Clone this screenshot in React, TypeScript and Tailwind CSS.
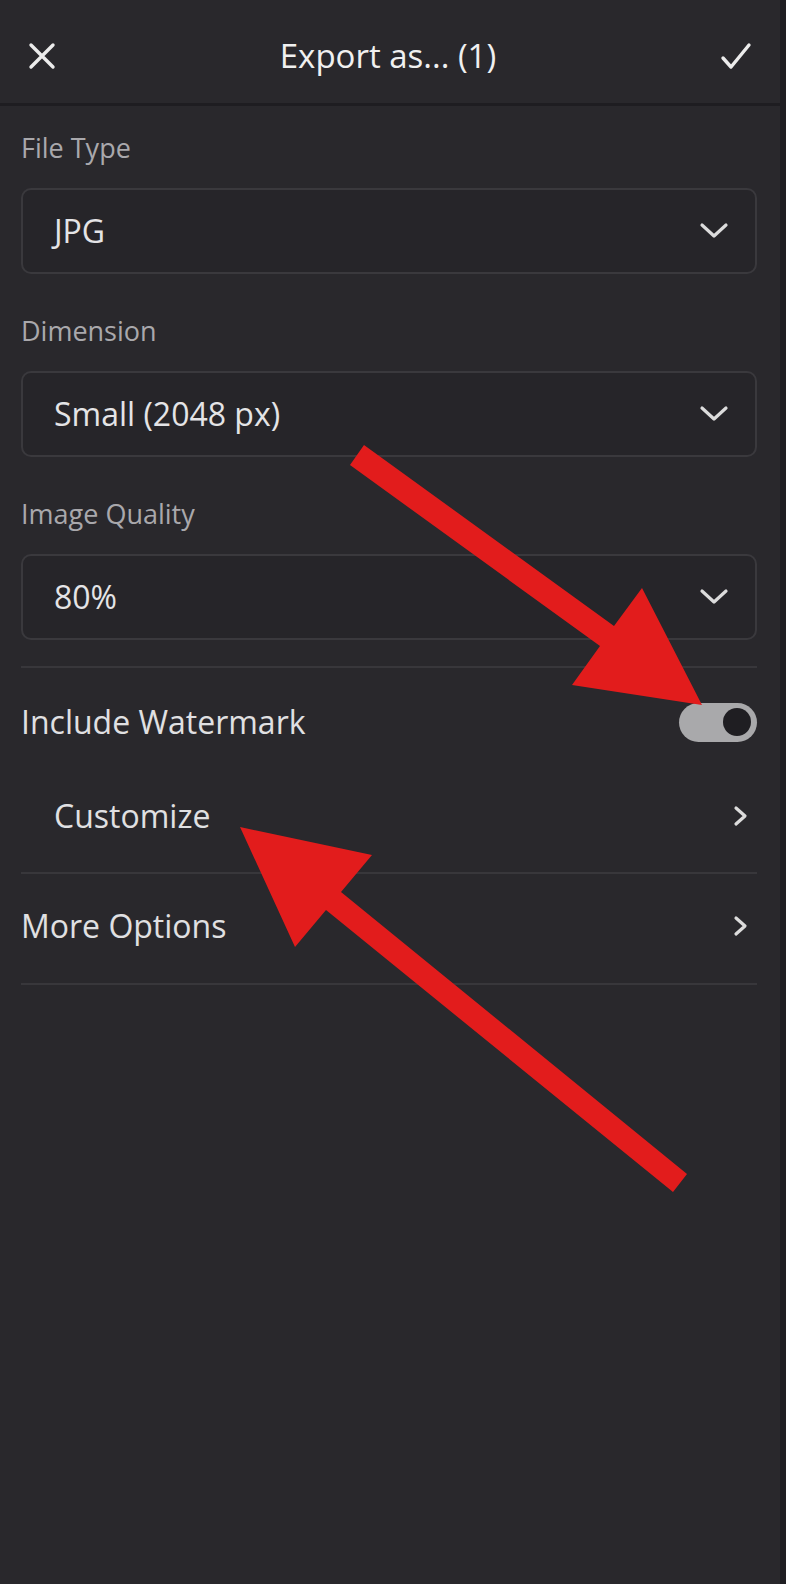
import React from 'react';

const font = { fontFamily: '"Open Sans", "Noto Sans", sans-serif' };

const ChevronDown = () => (
  <svg width="30" height="18" viewBox="0 0 30 18" fill="none">
    <path d="M3 3 L15 14 L27 3" stroke="#dcdcdc" strokeWidth="3.2" strokeLinecap="round" strokeLinejoin="round" />
  </svg>
);

const ChevronRight = () => (
  <svg width="18" height="22" viewBox="0 0 18 22" fill="none">
    <path d="M4 3 L13 11 L4 19" stroke="#dcdcdc" strokeWidth="3.2" strokeLinecap="round" strokeLinejoin="round" />
  </svg>
);

interface SelectFieldProps {
  label: string;
  value: string;
  first?: boolean;
}

const SelectField: React.FC<SelectFieldProps> = ({ label, value, first = false }) => (
  <div className={first ? 'mt-[24px]' : 'mt-[39px]'}>
    <div className="h-[36px] leading-[36px] text-[27px] text-[#a9a8ac]">{label}</div>
    <div className="mt-[22px] flex h-[86px] items-center justify-between rounded-[10px] border-2 border-[#3a393d] bg-[#262529] pl-[31px] pr-[26px]">
      <span className="text-[32px] text-[#e4e4e6]">{value}</span>
      <ChevronDown />
    </div>
  </div>
);

const Arrows = () => (
  <svg className="pointer-events-none absolute left-0 top-0" width="786" height="1584" viewBox="0 0 786 1584">
    <polygon
      fill="#e21c1c"
      points="350,465 600,646 572,685 702,705 642,588 614,626 364,445"
    />
    <polygon
      fill="#e21c1c"
      points="687,1174 341,892 372,855 240,827 295,947 326,910 673,1192"
    />
  </svg>
);

const App: React.FC = () => {
  return (
    <div className="relative flex h-[1584px] w-[786px] overflow-hidden bg-[#29282c]" style={font}>
      <div className="flex w-[780px] flex-col">
        {/* Header */}
        <div className="flex h-[106px] items-center justify-between border-b-[3px] border-[#1e1d21] px-[28px] pt-[8px]">
          <svg width="28" height="28" viewBox="0 0 28 28" fill="none">
            <path d="M3 3 L25 25 M25 3 L3 25" stroke="#ececec" strokeWidth="3.4" strokeLinecap="round" />
          </svg>
          <div className="text-[33px] font-medium text-[#f0f0f0]">Export as... (1)</div>
          <svg width="32" height="28" viewBox="0 0 32 28" fill="none">
            <path d="M3 16 L11 25 L29 3" stroke="#ececec" strokeWidth="3.4" strokeLinecap="round" strokeLinejoin="round" />
          </svg>
        </div>

        {/* Form */}
        <div className="flex flex-col pl-[21px] pr-[23px]">
          <SelectField first label="File Type" value="JPG" />
          <SelectField label="Dimension" value="Small (2048 px)" />
          <SelectField label="Image Quality" value="80%" />

          <div className="mt-[26px] h-[2px] bg-[#38373b]" />

          <div className="flex h-[108px] items-center justify-between">
            <span className="text-[32px] text-[#e0e0e2]">Include Watermark</span>
            <div className="flex h-[39px] w-[78px] items-center justify-end rounded-full bg-[#a9a9ab] pr-[6px]">
              <div className="h-[28px] w-[28px] rounded-full bg-[#1f1e22]" />
            </div>
          </div>

          <div className="flex h-[96px] items-center justify-between pb-[16px] pl-[33px] pr-[7px]">
            <span className="text-[32px] text-[#e0e0e2]">Customize</span>
            <ChevronRight />
          </div>

          <div className="h-[2px] bg-[#38373b]" />

          <div className="flex h-[109px] items-center justify-between pb-[5px] pr-[7px]">
            <span className="text-[32px] text-[#e0e0e2]">More Options</span>
            <ChevronRight />
          </div>

          <div className="h-[2px] bg-[#38373b]" />
        </div>
      </div>
      <div className="w-[6px] bg-[#1f1e22]" />
      <Arrows />
    </div>
  );
};

export default App;
